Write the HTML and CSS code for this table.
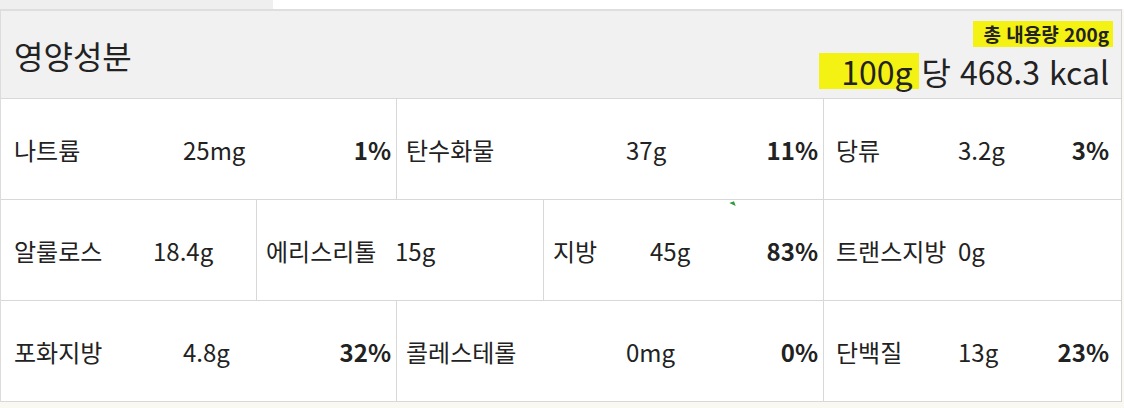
FILE: index.html
```html
<!DOCTYPE html>
<html lang="ko">
<head>
<meta charset="utf-8">
<link rel="stylesheet" href="styles.css">
</head>
<body>
<div class="topbar"><div class="tab"></div></div>
<section class="nutri">
  <header class="head">
    <h2 class="title">영양성분</h2>
    <div class="energy">
      <div class="total"><mark class="hl-s">총 내용량 200g</mark></div>
      <div class="per"><mark class="hl-l">100g</mark> 당 468.3 kcal</div>
    </div>
  </header>
  <div class="row row-3">
    <div class="cell first"><span class="lbl w169">나트륨</span><span class="val">25mg</span><span class="pct">1%</span></div>
    <div class="cell mid"><span class="lbl w220">탄수화물</span><span class="val">37g</span><span class="pct">11%</span></div>
    <div class="cell last"><span class="lbl w122">당류</span><span class="val">3.2g</span><span class="pct">3%</span></div>
  </div>
  <div class="row row-4">
    <div class="cell first"><span class="lbl w139">알룰로스</span><span class="val">18.4g</span></div>
    <div class="cell mid"><span class="lbl w129">에리스리톨</span><span class="val">15g</span></div>
    <div class="cell mid"><span class="lbl w97">지방</span><span class="val">45g</span><span class="pct">83%</span><i class="flag"></i></div>
    <div class="cell last"><span class="lbl w122">트랜스지방</span><span class="val">0g</span></div>
  </div>
  <div class="row row-3">
    <div class="cell first"><span class="lbl w169">포화지방</span><span class="val">4.8g</span><span class="pct">32%</span></div>
    <div class="cell mid"><span class="lbl w220">콜레스테롤</span><span class="val">0mg</span><span class="pct">0%</span></div>
    <div class="cell last"><span class="lbl w122">단백질</span><span class="val">13g</span><span class="pct">23%</span></div>
  </div>
</section>
<div class="after"></div>
</body>
</html>
```
FILE: styles.css
```css
html, body {
  margin: 0;
  padding: 0;
  background: #faf8f2;
  font-family: "Noto Sans CJK KR", "Noto Sans", sans-serif;
  color: #222;
}
.topbar {
  height: 9px;
  background: #fff;
  display: flex;
}
.tab {
  width: 273px;
  background: #efefef;
}
.nutri {
  width: 1120px;
  border-left: 1px solid #dcdcdc;
  border-right: 1px solid #d4d4d4;
  border-top: 2px solid #dedede;
  background: #fff;
}
.head {
  height: 87px;
  background: #f1f1f1;
  border-bottom: 1px solid #d8d8d8;
  display: flex;
  align-items: center;
  justify-content: space-between;
  padding: 0 12px 0 13px;
}
.title {
  margin: 0;
  font-size: 32px;
  font-weight: 400;
  line-height: 1;
}
.energy {
  display: flex;
  flex-direction: column;
  align-items: flex-end;
  gap: 6px;
}
.total {
  font-size: 19px;
  font-weight: 700;
  line-height: 26px;
  height: 26px;
}
.per {
  font-size: 32px;
  line-height: 36px;
  height: 36px;
}
mark {
  display: inline-block;
  background: #f4f213;
  color: inherit;
}
.hl-s {
  line-height: 26px;
  padding: 0 4px 0 10px;
  margin-right: -4px;
}
.hl-l {
  line-height: 36px;
  padding: 0 6px 0 22px;
  margin-right: -6px;
}
.row {
  display: grid;
  height: 100px;
  border-bottom: 1px solid #d8d8d8;
}
.row-3 {
  grid-template-columns: 395px 427px 1fr;
}
.row-4 {
  grid-template-columns: 255px 287px 280px 1fr;
}
.cell {
  position: relative;
  display: flex;
  align-items: center;
  font-size: 24px;
  padding: 0 5px 0 9px;
}
.cell.first {
  padding-left: 13px;
}
.cell.mid, .cell.last {
  border-left: 1px solid #d8d8d8;
}
.cell.last {
  padding-left: 12px;
  padding-right: 12px;
}
.lbl { flex: none; }
.w169 { width: 169px; }
.w220 { width: 220px; }
.w122 { width: 122px; }
.w139 { width: 139px; }
.w129 { width: 129px; }
.w97 { width: 97px; }
.val { flex: 1; }
.pct { font-weight: 700; }
.flag {
  position: absolute;
  left: 186px;
  top: 2px;
  width: 0;
  height: 0;
  border-top: 5px solid #2e9b3a;
  border-left: 5px solid transparent;
  transform: rotate(-20deg);
}
.after {
  height: 20px;
}
```
